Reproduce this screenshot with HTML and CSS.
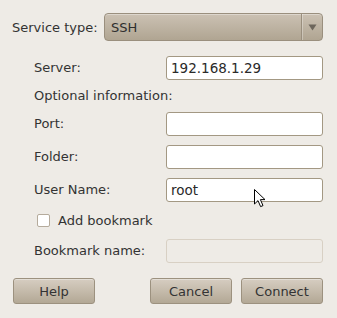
FILE: index.html
```html
<!DOCTYPE html>
<html lang="en">
<head>
    <meta charset="UTF-8">
    <title>Connect to Server</title>
    <link rel="stylesheet" href="styles.css">
</head>
<body>
    <div class="dialog">
        <div class="service-row">
            <span class="label">Service type:</span>
            <div class="combo">
                <span class="combo-text">SSH</span>
                <span class="combo-arrow">
                    <svg width="9" height="7" viewBox="0 0 9 7"><path d="M0.5 0.5 H8.5 L4.5 6.5 Z" fill="#6d665c"/></svg>
                </span>
            </div>
        </div>

        <div class="fields">
            <span class="label">Server:</span>
            <div class="entry">192.168.1.29</div>

            <span class="label span-2">Optional information:</span>

            <span class="label">Port:</span>
            <div class="entry"></div>

            <span class="label">Folder:</span>
            <div class="entry"></div>

            <span class="label">User Name:</span>
            <div class="entry user-entry">root
                <svg class="cursor" width="13" height="20" viewBox="0 0 13 20">
                    <path d="M1.5 1.5 V16 L5 12.6 L7.6 18.6 L10 17.6 L7.4 11.6 H12 Z" fill="#fff" stroke="#000" stroke-width="1" stroke-linejoin="miter"/>
                </svg>
            </div>

            <label class="check span-2"><span class="checkbox"></span>Add bookmark</label>

            <span class="label">Bookmark name:</span>
            <div class="entry disabled"></div>
        </div>

        <div class="buttons">
            <button class="btn">Help</button>
            <div class="spacer"></div>
            <button class="btn">Cancel</button>
            <button class="btn">Connect</button>
        </div>
    </div>
</body>
</html>
```

FILE: styles.css
```css
body {
    margin: 0;
    background-color: #eeebe6;
    font-family: "DejaVu Sans", sans-serif;
    font-size: 13px;
    color: #333;
}
.dialog {
    width: 337px;
    height: 318px;
    padding: 13px 14px 0 12px;
    box-sizing: border-box;
}
.service-row {
    display: flex;
    align-items: center;
    height: 28px;
}
.service-row .label {
    width: 92px;
}
.combo {
    flex: 1;
    height: 28px;
    box-sizing: border-box;
    display: flex;
    align-items: center;
    border: 1px solid #9a8f7e;
    border-radius: 4px;
    background: linear-gradient(#cbc1b3, #b0a592);
    box-shadow: inset 0 1px 0 rgba(255,255,255,0.35);
}
.combo-text {
    flex: 1;
    padding-left: 6px;
    color: #2f2f2f;
}
.combo-arrow {
    width: 20px;
    height: 100%;
    display: flex;
    align-items: center;
    justify-content: center;
    border-left: 1px solid #9a8f7e;
    box-shadow: inset 1px 0 0 rgba(255,255,255,0.3);
}
.fields {
    display: grid;
    grid-template-columns: 132px 157px;
    grid-template-rows: 24px 14px 24px 24px 24px 19px 24px;
    row-gap: 9px;
    align-items: center;
    margin: 15px 0 0 22px;
}
.fields .label {
    line-height: 16px;
}
.span-2 {
    grid-column: 1 / 3;
}
.entry {
    height: 24px;
    box-sizing: border-box;
    border: 1px solid #a39883;
    border-radius: 3px;
    background-color: #fff;
    padding: 0 4px;
    line-height: 22px;
    color: #2a2a2a;
    font-size: 13.5px;
}
.entry.disabled {
    background-color: #eeebe6;
    border-color: #d8d0c4;
}
.user-entry {
    position: relative;
}
.cursor {
    position: absolute;
    left: 86px;
    top: 9px;
}
.check {
    display: flex;
    align-items: center;
    gap: 8px;
    padding-left: 3px;
}
.checkbox {
    width: 11px;
    height: 11px;
    border: 1px solid #b5ab9c;
    border-radius: 2px;
    background-color: #fff;
}
.buttons {
    display: flex;
    gap: 9px;
    margin-top: 15px;
    padding-left: 1px;
}
.spacer {
    flex: 1;
}
.btn {
    width: 82px;
    height: 26px;
    border: 1px solid #9c917f;
    border-radius: 3px;
    background: linear-gradient(#d6cdc1, #b3a895);
    box-shadow: inset 0 1px 0 rgba(255,255,255,0.35);
    font-family: "DejaVu Sans", sans-serif;
    font-size: 13px;
    color: #333;
    padding: 0;
}
```
